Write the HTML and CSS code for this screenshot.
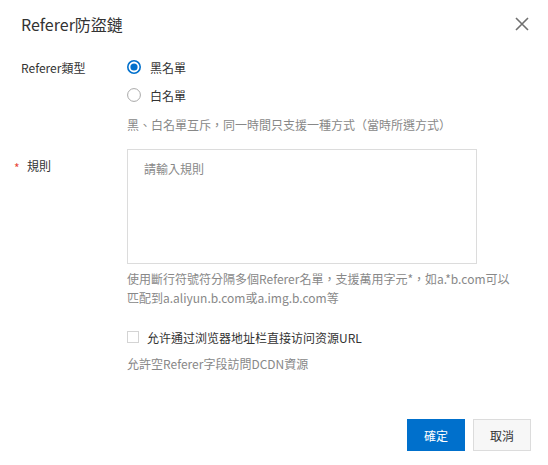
FILE: index.html
```html
<!DOCTYPE html>
<html lang="zh-Hant">
<head>
<meta charset="utf-8">
<title>Referer防盜鏈</title>
<link rel="stylesheet" href="styles.css">
</head>
<body>
<div class="dialog">
  <div class="header">
    <div class="title">Referer防盜鏈</div>
    <span class="close" aria-label="close">
      <svg width="14" height="14" viewBox="0 0 14 14"><path d="M1 1 L13 13 M13 1 L1 13" stroke="#707070" stroke-width="1.6" fill="none"/></svg>
    </span>
  </div>
  <div class="form">
    <div class="row row-type">
      <div class="label">Referer類型</div>
      <div class="control">
        <label class="radio">
          <svg class="radio-icon" width="14" height="14" viewBox="0 0 14 14"><circle cx="7" cy="7" r="6.2" fill="#fff" stroke="#0070cc" stroke-width="1.6"/><circle cx="7" cy="7" r="3.6" fill="#0070cc"/></svg>
          <span>黑名單</span>
        </label>
        <label class="radio">
          <svg class="radio-icon" width="14" height="14" viewBox="0 0 14 14"><circle cx="7" cy="7" r="6.4" fill="#fff" stroke="#a8a8a8" stroke-width="1"/></svg>
          <span>白名單</span>
        </label>
        <div class="hint hint-type">黑、白名單互斥，同一時間只支援一種方式（當時所選方式）</div>
      </div>
    </div>
    <div class="row row-rule">
      <div class="label"><span class="req">*</span>規則</div>
      <div class="control">
        <textarea class="rules" placeholder="請輸入規則"></textarea>
        <div class="help">使用斷行符號符分隔多個Referer名單，支援萬用字元*，如a.*b.com可以<br>匹配到a.aliyun.b.com或a.img.b.com等</div>
        <label class="check">
          <span class="box"></span>
          <span>允许通过浏览器地址栏直接访问资源URL</span>
        </label>
        <div class="hint hint-empty">允許空Referer字段訪問DCDN資源</div>
      </div>
    </div>
  </div>
  <div class="footer">
    <button class="btn btn-primary">確定</button>
    <button class="btn btn-normal">取消</button>
  </div>
</div>
</body>
</html>
```
FILE: styles.css
```css
html, body {
  margin: 0;
  padding: 0;
  background: #fff;
}
body {
  font-family: "Noto Sans CJK TC", "Noto Sans", sans-serif;
  font-size: 12px;
  color: #333;
}
.dialog {
  height: 465px;
  box-sizing: border-box;
  display: flex;
  flex-direction: column;
  padding: 0 17px 14px 21px;
}
.header {
  display: flex;
  align-items: center;
  justify-content: space-between;
  padding-top: 12px;
  height: 24px;
}
.title {
  font-size: 16px;
  line-height: 24px;
  color: #333;
}
.close {
  display: flex;
  width: 14px;
  height: 14px;
  margin-right: 2px;
  margin-top: -1px;
}
.form {
  display: flex;
  flex-direction: column;
  margin-top: 17px;
}
.row {
  display: flex;
}
.label {
  width: 106px;
  flex: none;
  line-height: 20px;
  color: #333;
}
.row-type .label {
  padding-top: 5px;
}
.control {
  display: flex;
  flex-direction: column;
  align-items: flex-start;
}
.radio {
  display: flex;
  align-items: center;
  height: 28px;
}
.radio-icon {
  margin-right: 9px;
  flex: none;
}
.hint {
  color: #888;
  line-height: 20px;
}
.hint-type {
  margin-top: 6px;
}
.row-rule {
  margin-top: 14px;
}
.row-rule .label {
  padding-top: 7px;
  margin-left: -7px;
  width: 113px;
}
.req {
  color: #e84738;
  display: inline-block;
  width: 13px;
  font-size: 12px;
  vertical-align: -2px;
}
.rules {
  width: 350px;
  height: 115px;
  box-sizing: border-box;
  border: 1px solid #dcdcdc;
  padding: 9px 16px;
  margin: 0;
  resize: none;
  font-family: "Noto Sans CJK TC", "Noto Sans", sans-serif;
  font-size: 12px;
  line-height: 20px;
  color: #333;
  outline: none;
  display: block;
}
.rules::placeholder {
  color: #888;
}
.help {
  color: #888;
  line-height: 19px;
  margin-top: 5px;
  white-space: nowrap;
}
.check {
  display: flex;
  align-items: center;
  height: 20px;
  margin-top: 20px;
  color: #333;
}
.box {
  width: 12px;
  height: 12px;
  box-sizing: border-box;
  border: 1px solid #d4d4d4;
  background: #fff;
  margin-right: 8px;
  flex: none;
}
.hint-empty {
  margin-top: 7px;
}
.footer {
  margin-top: auto;
  display: flex;
  justify-content: flex-end;
  gap: 8px;
}
.btn {
  height: 32px;
  width: 58px;
  box-sizing: border-box;
  font-family: "Noto Sans CJK TC", "Noto Sans", sans-serif;
  font-size: 12px;
  padding: 0;
  cursor: pointer;
}
.btn-primary {
  background: #0070cc;
  border: 1px solid #0070cc;
  color: #fff;
}
.btn-normal {
  background: #f7f7f7;
  border: 1px solid #dcdcdc;
  color: #333;
}
```
